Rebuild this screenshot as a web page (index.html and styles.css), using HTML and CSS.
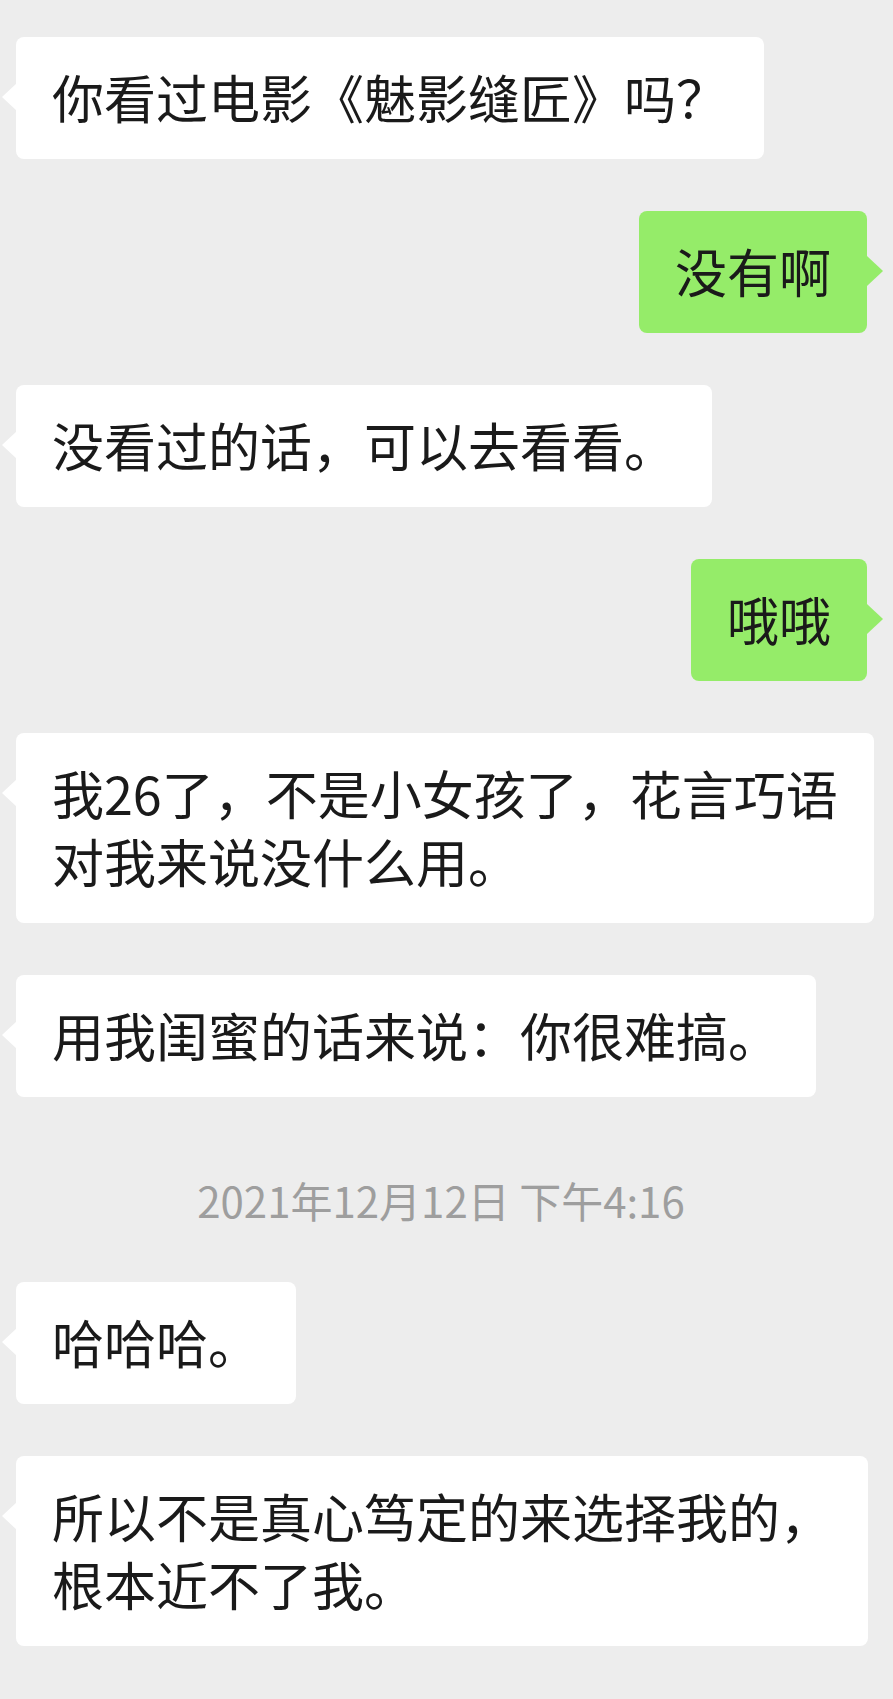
FILE: index.html
```html
<!DOCTYPE html>
<html lang="zh-CN">
<head>
<meta charset="utf-8">
<title>聊天记录</title>
<link rel="stylesheet" href="styles.css">
</head>
<body>
<div class="chat">
  <div class="row left"><div class="bubble">你看过电影《魅影缝匠》吗？</div></div>
  <div class="row right"><div class="bubble mine">没有啊</div></div>
  <div class="row left"><div class="bubble">没看过的话，可以去看看。</div></div>
  <div class="row right"><div class="bubble mine">哦哦</div></div>
  <div class="row left"><div class="bubble">我26了，不是小女孩了，花言巧语<br>对我来说没什么用。</div></div>
  <div class="row left"><div class="bubble">用我闺蜜的话来说：你很难搞。</div></div>
  <div class="time">2021年12月12日 下午4:16</div>
  <div class="row left"><div class="bubble">哈哈哈。</div></div>
  <div class="row left"><div class="bubble">所以不是真心笃定的来选择我的，<br>根本近不了我。</div></div>
</div>
</body>
</html>
```
FILE: styles.css
```css
html {
  background: #ededed;
}
body {
  margin: 0;
  background: #ededed;
  font-family: "Noto Sans CJK SC", "Noto Sans", sans-serif;
}
.chat {
  display: flex;
  flex-direction: column;
  gap: 52px;
  padding: 37px 0 52px 16px;
}
.row {
  display: flex;
}
.row.right {
  justify-content: flex-end;
  padding-right: 26px;
}
.bubble {
  position: relative;
  box-sizing: border-box;
  max-width: 876px;
  padding: 26px 36px 28px;
  font-size: 52px;
  line-height: 68px;
  color: #1a1a1a;
  background: #ffffff;
  border-radius: 8px;
  white-space: nowrap;
}
.bubble::before {
  content: "";
  position: absolute;
  top: 46px;
  left: -14px;
  border-top: 14px solid transparent;
  border-bottom: 14px solid transparent;
  border-right: 15px solid #ffffff;
}
.bubble.mine {
  background: #95ec69;
}
.bubble.mine::before {
  left: auto;
  right: -16px;
  top: 45px;
  border-right: 0;
  border-top-width: 15px;
  border-bottom-width: 15px;
  border-left: 16px solid #95ec69;
}
.time {
  margin-left: -16px;
  padding: 26px 11px 5px 0;
  text-align: center;
  font-size: 42px;
  line-height: 50px;
  color: #9e9e9e;
}
```
